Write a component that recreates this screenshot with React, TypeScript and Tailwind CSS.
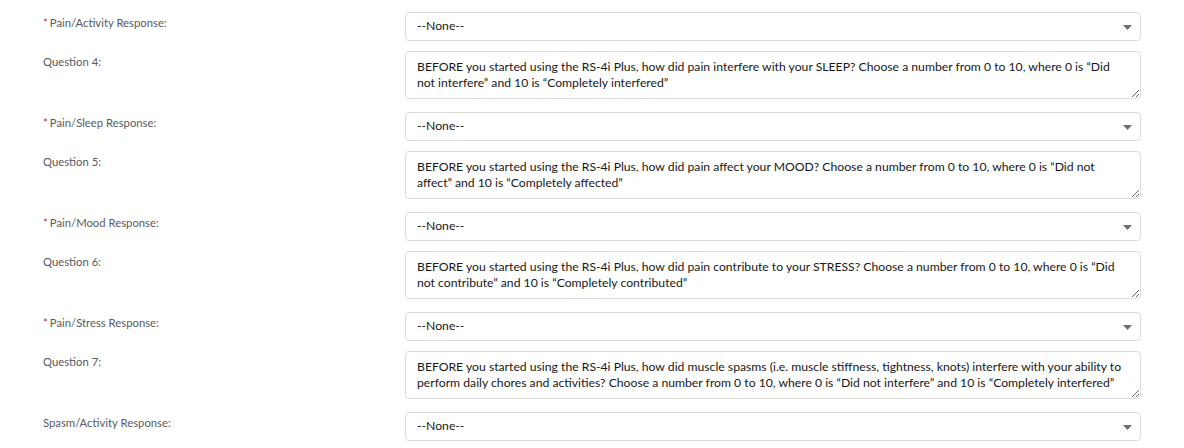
import React from "react";

type Row =
  | { kind: "select"; label: string; required: boolean }
  | { kind: "text"; label: string; value: string };

const rows: Row[] = [
  { kind: "select", label: "Pain/Activity Response:", required: true },
  {
    kind: "text",
    label: "Question 4:",
    value:
      "BEFORE you started using the RS-4i Plus, how did pain interfere with your SLEEP? Choose a number from 0 to 10, where 0 is \u201cDid not interfere\u201d and 10 is \u201cCompletely interfered\u201d",
  },
  { kind: "select", label: "Pain/Sleep Response:", required: true },
  {
    kind: "text",
    label: "Question 5:",
    value:
      "BEFORE you started using the RS-4i Plus, how did pain affect your MOOD? Choose a number from 0 to 10, where 0 is \u201cDid not affect\u201d and 10 is \u201cCompletely affected\u201d",
  },
  { kind: "select", label: "Pain/Mood Response:", required: true },
  {
    kind: "text",
    label: "Question 6:",
    value:
      "BEFORE you started using the RS-4i Plus, how did pain contribute to your STRESS? Choose a number from 0 to 10, where 0 is \u201cDid not contribute\u201d and 10 is \u201cCompletely contributed\u201d",
  },
  { kind: "select", label: "Pain/Stress Response:", required: true },
  {
    kind: "text",
    label: "Question 7:",
    value:
      "BEFORE you started using the RS-4i Plus, how did muscle spasms (i.e. muscle stiffness, tightness, knots) interfere with your ability to perform daily chores and activities? Choose a number from 0 to 10, where 0 is \u201cDid not interfere\u201d and 10 is \u201cCompletely interfered\u201d",
  },
  { kind: "select", label: "Spasm/Activity Response:", required: false },
];

function FieldLabel({ label, required }: { label: string; required?: boolean }) {
  return (
    <div className="w-[362px] shrink-0 pt-[3px] text-[11.3px] leading-4 text-[#5a5a5e]">
      {required ? (
        <span className="mr-[2px] text-[#c23934]">*</span>
      ) : null}
      {label}
    </div>
  );
}

function SelectBox() {
  return (
    <div className="relative flex h-[29px] flex-1 items-center rounded-[4px] border border-[#dddbda] bg-white pl-[11px] text-[12.2px] text-[#181818]">
      --None--
      <svg
        className="absolute right-[8px] top-[12px]"
        width="9"
        height="5"
        viewBox="0 0 9 5"
      >
        <path d="M0 0h9L4.5 5z" fill="#706e6b" />
      </svg>
    </div>
  );
}

export default function App() {
  return (
    <div
      className="h-[448px] w-[1184px] overflow-hidden bg-white pl-[43px] pt-[12px]"
      style={{ fontFamily: "Lato, 'Open Sans', sans-serif" }}
    >
      <div className="flex w-[1098px] flex-col">
        {rows.map((row, i) =>
          row.kind === "select" ? (
            <div key={i} className={i === 0 ? "flex" : "mt-[13px] flex"}>
              <FieldLabel label={row.label} required={row.required} />
              <SelectBox />
            </div>
          ) : (
            <div key={i} className="mt-[10px] flex">
              <FieldLabel label={row.label} />
              <textarea
                readOnly
                defaultValue={row.value}
                className="h-[48px] flex-1 resize-y overflow-hidden rounded-[4px] border border-[#dddbda] bg-white px-[11px] pt-[7px] text-[12.2px] leading-4 text-[#181818] outline-none"
              />
            </div>
          ),
        )}
      </div>
    </div>
  );
}
